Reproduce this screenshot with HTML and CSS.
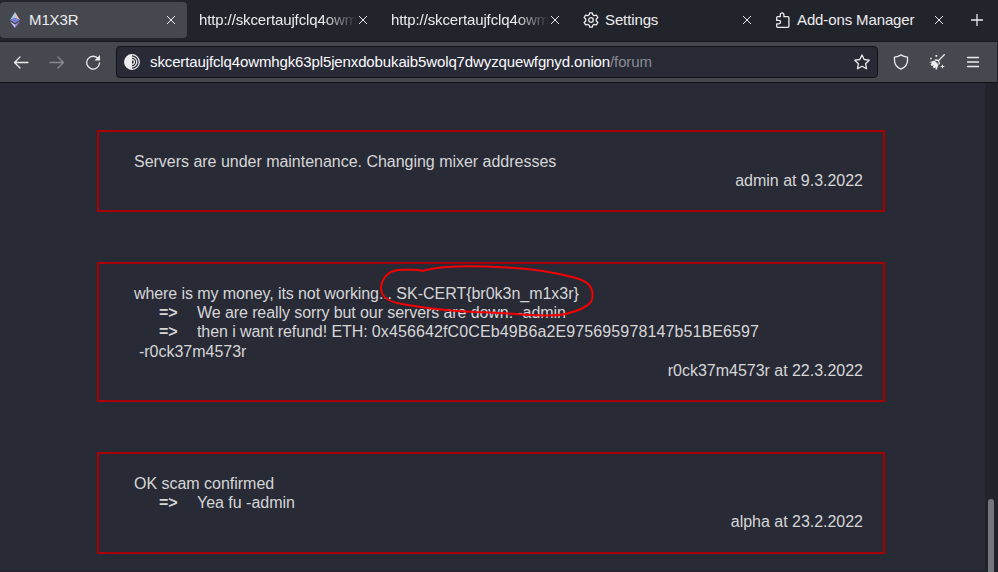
FILE: index.html
```html
<!DOCTYPE html>
<html lang="en">
<head>
<meta charset="utf-8">
<title>M1X3R</title>
<link rel="stylesheet" href="styles.css">
</head>
<body>
<div class="window">
  <header class="tabs">
    <div class="tab active">
      <svg class="favicon" width="16" height="16" viewBox="0 0 16 16"><path fill="#8fd0ee" d="M8 0 3 8l5-2z"/><path fill="#f0b7b4" d="m8 0 5 8-5-2z"/><path fill="#8578d6" d="m3 8 5-2v5z"/><path fill="#6b86e5" d="m13 8-5-2v5z"/><path fill="#c4c6f7" d="m3 9.500 5 3V16z"/><path fill="#a884dc" d="m13 9.500-5 3V16z"/></svg>
      <span class="label">M1X3R</span>
      <svg class="close" width="8" height="8" viewBox="0 0 8 8"><path d="m.3.3 7.400 7.400m0-7.400L.3 7.700"/></svg>
    </div>
    <div class="tab">
      <span class="label fade">http://skcertaujfclq4owm</span>
      <svg class="close" width="8" height="8" viewBox="0 0 8 8"><path d="m.3.3 7.400 7.400m0-7.400L.3 7.700"/></svg>
    </div>
    <div class="tab">
      <span class="label fade">http://skcertaujfclq4owm</span>
      <svg class="close" width="8" height="8" viewBox="0 0 8 8"><path d="m.3.3 7.400 7.400m0-7.400L.3 7.700"/></svg>
    </div>
    <div class="tab">
      <svg class="favicon line" width="16" height="16" viewBox="0 0 16 16"><path d="M6.800.8h2.400l.6 2 1.500.9 2.100-.5 1.500 2.300L13.300 7v2l1.600 1.500-1.500 2.300-2.100-.5-1.500.9-.6 2H6.800l-.6-2-1.500-.9-2.100.5-1.500-2.300L2.700 9V7L1.100 5.500l1.500-2.300 2.100.5 1.500-.9z"/><circle cx="8" cy="8" r="2.300"/></svg>
      <span class="label">Settings</span>
      <svg class="close" width="8" height="8" viewBox="0 0 8 8"><path d="m.3.3 7.400 7.400m0-7.400L.3 7.700"/></svg>
    </div>
    <div class="tab">
      <svg class="favicon line" width="16" height="16" viewBox="0 0 16 16"><path d="M5.300 4.700V2.700a1.800 1.800 0 0 1 3.600 0v2h4q1 0 1 1v8.600q0 1-1 1H2.700q-1 0-1-1v-2.500H3.900a1.700 1.700 0 0 0 0-3.400H1.700V5.700q0-1 1-1z"/></svg>
      <span class="label">Add-ons Manager</span>
      <svg class="close" width="8" height="8" viewBox="0 0 8 8"><path d="m.3.3 7.400 7.400m0-7.400L.3 7.700"/></svg>
    </div>
    <svg class="plus" width="12" height="12" viewBox="0 0 12 12"><path d="M6 .5v11M.5 6h11"/></svg>
  </header>
  <nav class="toolbar">
    <svg class="tool" width="16" height="16" viewBox="0 0 16 16"><path d="M15 8.500H1.500M7 3 1.500 8.500 7 14"/></svg>
    <svg class="tool dim" width="16" height="16" viewBox="0 0 16 16"><path d="M1 8.500h13.500M9 3l5.500 5.500L9 14"/></svg>
    <svg class="tool" width="16" height="16" viewBox="0 0 16 16"><path d="M13.500 5.200A6.400 6.400 0 1 0 14.500 9"/><path class="solid" d="M15 1v5.500H9.500z"/></svg>
    <div class="address">
      <svg class="onion" width="16" height="16" viewBox="0 0 16 16"><circle cx="8" cy="8" r="7.300"/><path class="solid" d="M8 .5a7.500 7.500 0 0 0 0 15z"/><path d="M8 3.200a4.800 4.800 0 0 1 0 9.600M8 5.600a2.400 2.400 0 0 1 0 4.800"/></svg>
      <span class="url">skcertaujfclq4owmhgk63pl5jenxdobukaib5wolq7dwyzquewfgnyd.onion<span class="path">/forum</span></span>
      <svg class="star" width="16" height="16" viewBox="0 0 16 16"><path d="m8 1 2.200 4.500 5 .7-3.600 3.500.9 5L8 12.300l-4.500 2.400.9-5L.8 6.200l5-.7z"/></svg>
    </div>
    <svg class="tool" width="16" height="16" viewBox="0 0 16 16"><path d="M8 .9c2 1.400 4.200 2 6.500 2.200v3.400c0 4-2.200 6.800-6.500 8.600-4.300-1.800-6.500-4.600-6.500-8.600V3.100C3.800 2.900 6 2.300 8 .9z"/></svg>
    <svg class="tool" width="16" height="16" viewBox="0 0 16 16"><path d="M15.300.7 9.500 6.500M6.500 6q3.800-.2 3.800 3.800"/><path class="solid" d="m.2 8.200 5.300-1.700 4 4-1.700 5-1.500-.3.500-2-1.800 1-1.300-1.200 1-1.800-1.900.7L1.500 10.400l1.500-1.600z"/><path class="solid" d="M6.500 1h1.700v1.700H6.500zM1.200 3.700h1.500v1.500H1.200zM13 10.700h1v1.300h1.300v1H14v1.300h-1V13h-1.300v-1H13z"/></svg>
    <svg class="tool" width="16" height="16" viewBox="0 0 16 16"><path d="M2.500 3.500h11M2.500 8h11M2.500 12.500h11"/></svg>
  </nav>
  <div class="view">
    <main class="page">
      <article class="post">
        <div>Servers are under maintenance. Changing mixer addresses</div>
        <div class="sign">admin at 9.3.2022</div>
      </article>
      <article class="post">
        <div><span class="tight">where is my money, its not working... </span>SK-CERT{br0k3n_m1x3r}</div>
        <div class="reply tight"><b>=&gt;</b>We are really sorry but our servers are down. -admin</div>
        <div class="reply tight"><b>=&gt;</b>then i want refund! ETH: <span class="wallet">0x456642fC0CEb49B6a2E975695978147b51BE6597</span></div>
        <div class="nick">-r0ck37m4573r</div>
        <div class="sign">r0ck37m4573r at 22.3.2022</div>
        <svg class="mark" width="230" height="60" viewBox="375 260 230 60"><path d="M423 271C417 269 407 270 398 270C388 271 381 279 381 289C382 299 391 302 402 304C424 308 449 311 475 312C500 312 520 315 545 315.500C563 316 573 313 583 308C591 304 593 300 592.500 294C592 285 586 281 576 278C555 272 533 269 507 267.500C479 266 446 266 431 269C427 270 424 270 423 271"/></svg>
      </article>
      <article class="post">
        <div>OK scam confirmed</div>
        <div class="reply"><b>=&gt;</b>Yea fu -admin</div>
        <div class="sign">alpha at 23.2.2022</div>
      </article>
    </main>
    <aside class="scroll"><div class="thumb"></div></aside>
  </div>
</div>
</body>
</html>
```
FILE: styles.css
```css
* { box-sizing: border-box; }
body {
  margin: 0;
  background: #22242c;
  font-family: "Liberation Sans", Arial, sans-serif;
}
svg { fill: none; flex: none; }
.window {
  width: 998px;
  height: 572px;
  padding-right: 1px;
  display: flex;
  flex-direction: column;
  overflow: hidden;
}
.tabs {
  height: 41px;
  flex: none;
  display: flex;
  align-items: flex-start;
  gap: 4px;
  padding-top: 2px;
  font-size: 15px;
  letter-spacing: -.12px;
  color: #ececee;
}
.tab {
  width: 188px;
  height: 36px;
  flex: none;
  display: flex;
  align-items: center;
  padding: 0 13px 0 7px;
}
.tab.active {
  width: 187px;
  margin-right: 1px;
  padding-right: 12px;
  background: #46484f;
  border-radius: 4px;
}
.favicon { margin-right: 6px; }
.label {
  flex: 1;
  min-width: 0;
  padding-bottom: 2px;
  white-space: nowrap;
}
.fade {
  mask-image: linear-gradient(to right, #000 calc(100% - 36px), transparent calc(100% - 2px));
}
.line, .tool, .star, .onion, .close, .plus {
  stroke: #ececee;
  stroke-width: 1.3;
  stroke-linejoin: round;
  stroke-linecap: round;
}
.close { stroke-width: 1; }
.plus { margin: 12px 0 0 11px; }
.solid { fill: #ececee; stroke: none; }
.toolbar {
  height: 42px;
  flex: none;
  display: flex;
  align-items: center;
  gap: 20px;
  padding: 0 16px 0 13px;
  background: #46484f;
  border-top: 1px solid #17181d;
  border-bottom: 1px solid #111217;
}
.dim { opacity: .4; }
.address {
  width: 762px;
  height: 32px;
  margin: 0 -5px 0 -5px;
  display: flex;
  align-items: center;
  padding: 0 7px;
  background: #282a36;
  border: 1px solid #111217;
  border-radius: 4px;
  font-size: 15px;
  letter-spacing: -.125px;
  color: #fbfbfe;
}
.url {
  flex: 1;
  margin-left: 10px;
  padding-bottom: 1px;
  white-space: nowrap;
}
.path { color: #8b8c93; }
.view { flex: 1; display: flex; min-height: 0; }
.page {
  flex: 1;
  display: flex;
  flex-direction: column;
  gap: 50px;
  padding: 46.6px 100px 0 97px;
  background: #282a36;
  border-bottom: 1px solid #2b2130;
  font-size: 16px;
  line-height: 19.2px;
  letter-spacing: -.02px;
  color: #d6d6d6;
}
.post {
  position: relative;
  flex: none;
  padding: 20px 20px 20px 35px;
  border: 2px solid #a90000;
}
.tight { letter-spacing: -.085px; }
.wallet { letter-spacing: .11px; }
.reply { padding-left: 25px; }
.reply b { display: inline-block; width: 38px; }
.nick { padding-left: 5px; }
.sign { text-align: right; }
.mark {
  position: absolute;
  left: 276px;
  top: -4px;
  stroke: #f50000;
  stroke-width: 2;
  stroke-linecap: round;
}
.scroll {
  width: 12px;
  display: flex;
  align-items: flex-end;
  justify-content: center;
  background: #22242c;
}
.thumb {
  width: 6px;
  height: 73px;
  border-radius: 3px 3px 0 0;
  background: #76777d;
}
```
